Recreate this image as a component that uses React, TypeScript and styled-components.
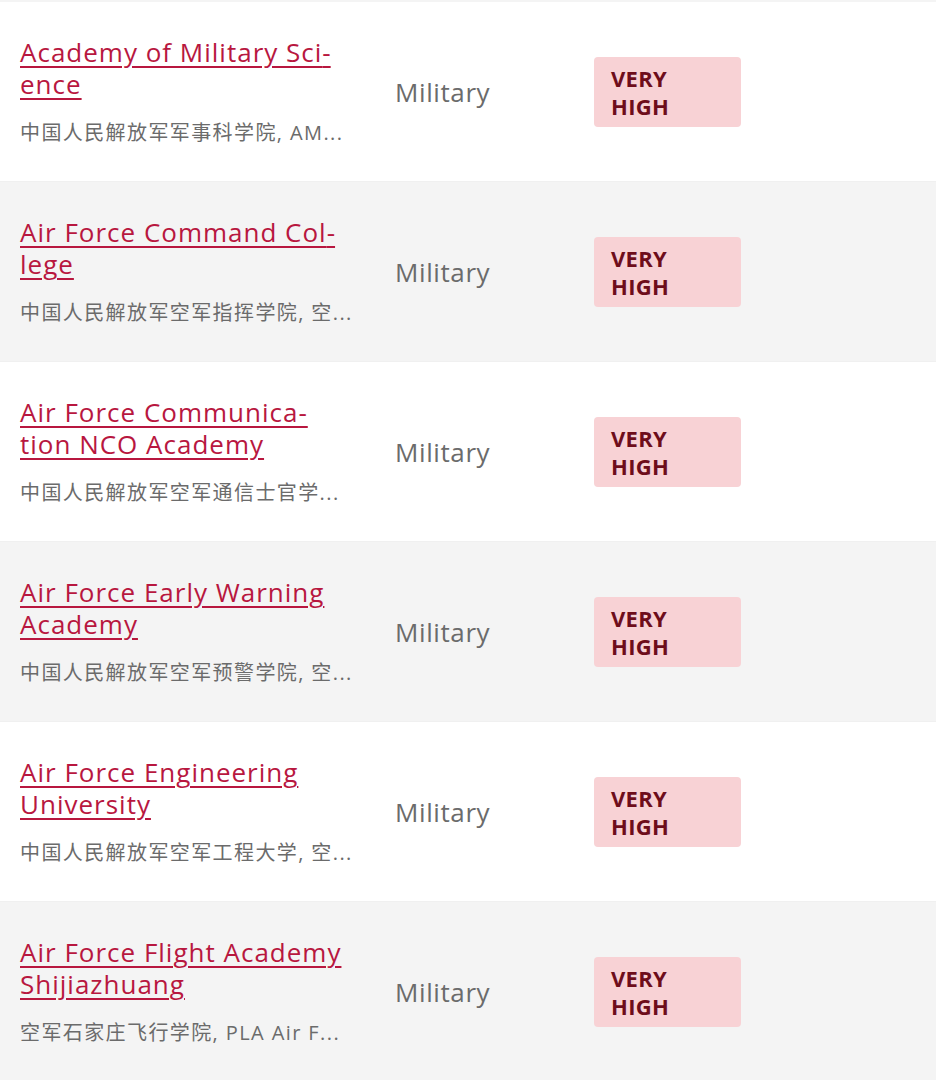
import React from "react";
import styled, { createGlobalStyle } from "styled-components";

interface Institution {
  name: string;
  chinese: string;
  category: string;
  risk: string;
}

// subtitles are shown already shortened, as on the source page
const institutions: Institution[] = [
  {
    name: "Academy of Military Sci\u00ADence",
    chinese: "中国人民解放军军事科学院, AM...",
    category: "Military",
    risk: "VERY HIGH",
  },
  {
    name: "Air Force Command Col\u00ADlege",
    chinese: "中国人民解放军空军指挥学院, 空...",
    category: "Military",
    risk: "VERY HIGH",
  },
  {
    name: "Air Force Communica-\ntion NCO Academy",
    chinese: "中国人民解放军空军通信士官学...",
    category: "Military",
    risk: "VERY HIGH",
  },
  {
    name: "Air Force Early Warning Academy",
    chinese: "中国人民解放军空军预警学院, 空...",
    category: "Military",
    risk: "VERY HIGH",
  },
  {
    name: "Air Force Engineering University",
    chinese: "中国人民解放军空军工程大学, 空...",
    category: "Military",
    risk: "VERY HIGH",
  },
  {
    name: "Air Force Flight Academy Shijiazhuang",
    chinese: "空军石家庄飞行学院, PLA Air F...",
    category: "Military",
    risk: "VERY HIGH",
  },
];

const GlobalStyle = createGlobalStyle`
  body {
    margin: 0;
    background: #ffffff;
    font-family: "Open Sans", "Noto Sans CJK SC", sans-serif;
  }
`;

const List = styled.div`
  width: 936px;
  border-top: 2px solid #f4f4f4;
`;

const Row = styled.div<{ $shaded: boolean }>`
  display: grid;
  grid-template-columns: 335px 159px 147px;
  column-gap: 40px;
  align-items: center;
  height: 180px;
  padding-left: 20px;
  box-sizing: border-box;
  background-color: ${(p) => (p.$shaded ? "#f4f4f4" : "#ffffff")};
  border-bottom: 1px solid #f0f0f0;
`;

const NameCell = styled.div`
  min-width: 0;
`;

const Title = styled.a`
  display: block;
  font-size: 26px;
  line-height: 32px;
  letter-spacing: 1px;
  color: #b8173f;
  text-decoration: underline;
  text-decoration-thickness: 1.5px;
  text-underline-offset: 4px;
  white-space: pre-line;
  hyphens: manual;
  cursor: pointer;
`;

const Subtitle = styled.div`
  margin-top: 19px;
  font-size: 20px;
  line-height: 28px;
  letter-spacing: 1.4px;
  color: #6b6b6b;
  white-space: nowrap;
`;

const Category = styled.div`
  font-size: 26px;
  letter-spacing: 0.6px;
  color: #6b6b6b;
`;

const Badge = styled.div`
  width: 147px;
  box-sizing: border-box;
  padding: 7px 17px;
  border-radius: 4px;
  background-color: #f8d2d5;
  color: #6e0d1b;
  font-size: 22px;
  font-weight: 700;
  line-height: 28px;
  letter-spacing: 0.3px;
`;

export default function App() {
  return (
    <>
      <GlobalStyle />
      <List>
        {institutions.map((item, i) => (
          <Row key={item.name} $shaded={i % 2 === 1}>
            <NameCell>
              <Title lang="en">{item.name}</Title>
              <Subtitle>{item.chinese}</Subtitle>
            </NameCell>
            <Category>{item.category}</Category>
            <Badge>
              {item.risk.split(" ").map((w) => (
                <div key={w}>{w}</div>
              ))}
            </Badge>
          </Row>
        ))}
      </List>
    </>
  );
}
